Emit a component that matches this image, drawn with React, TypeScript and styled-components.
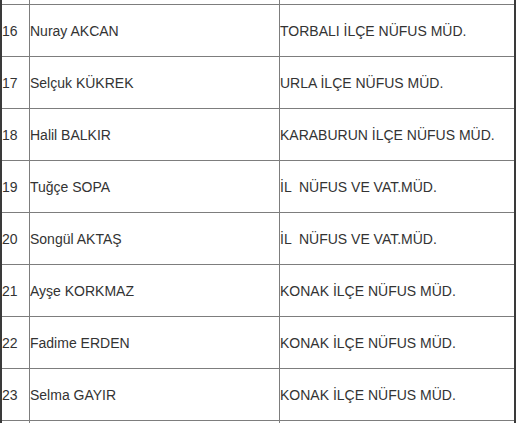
import React from "react";
import styled, { createGlobalStyle } from "styled-components";

const Global = createGlobalStyle`
  html, body { margin: 0; padding: 0; background: #fff; }
  body { font-family: "Liberation Sans", Arial, sans-serif; }
  *, *::before, *::after { box-sizing: border-box; }
`;

const Page = styled.div`
  width: 518px;
  height: 423px;
  overflow: hidden;
  background: #fff;
`;

const Table = styled.div`
  width: 516px;
  border-left: 2px solid #3a3a3a;
  border-right: 2px solid #3a3a3a;
  display: flex;
  flex-direction: column;
`;

const Row = styled.div<{ $h: number; $line?: boolean }>`
  display: grid;
  grid-template-columns: 28px 250px 234px;
  height: ${(p) => p.$h}px;
  flex: none;
  border-bottom: ${(p) => (p.$line ? "1px solid #7d7d7d" : "none")};
`;

const Cell = styled.div<{ $last?: boolean }>`
  display: flex;
  align-items: center;
  border-right: ${(p) => (p.$last ? "none" : "1px solid #7d7d7d")};
  font-size: 14px;
  color: #333;
  white-space: pre;
  overflow: hidden;
`;

const rows: [string, string, string][] = [
  ["16", "Nuray AKCAN", "TORBALI İLÇE NÜFUS MÜD."],
  ["17", "Selçuk KÜKREK", "URLA İLÇE NÜFUS MÜD."],
  ["18", "Halil BALKIR", "KARABURUN İLÇE NÜFUS MÜD."],
  ["19", "Tuğçe SOPA", "İL  NÜFUS VE VAT.MÜD."],
  ["20", "Songül AKTAŞ", "İL  NÜFUS VE VAT.MÜD."],
  ["21", "Ayşe KORKMAZ", "KONAK İLÇE NÜFUS MÜD."],
  ["22", "Fadime ERDEN", "KONAK İLÇE NÜFUS MÜD."],
  ["23", "Selma GAYIR", "KONAK İLÇE NÜFUS MÜD."],
];

export default function App() {
  return (
    <Page>
      <Global />
      <Table>
        <Row $h={5} $line>
          <Cell />
          <Cell />
          <Cell $last />
        </Row>
        {rows.map(([n, name, office]) => (
          <Row key={n} $h={52} $line>
            <Cell>{n}</Cell>
            <Cell>{name}</Cell>
            <Cell $last>{office}</Cell>
          </Row>
        ))}
        <Row $h={10}>
          <Cell />
          <Cell />
          <Cell $last />
        </Row>
      </Table>
    </Page>
  );
}
